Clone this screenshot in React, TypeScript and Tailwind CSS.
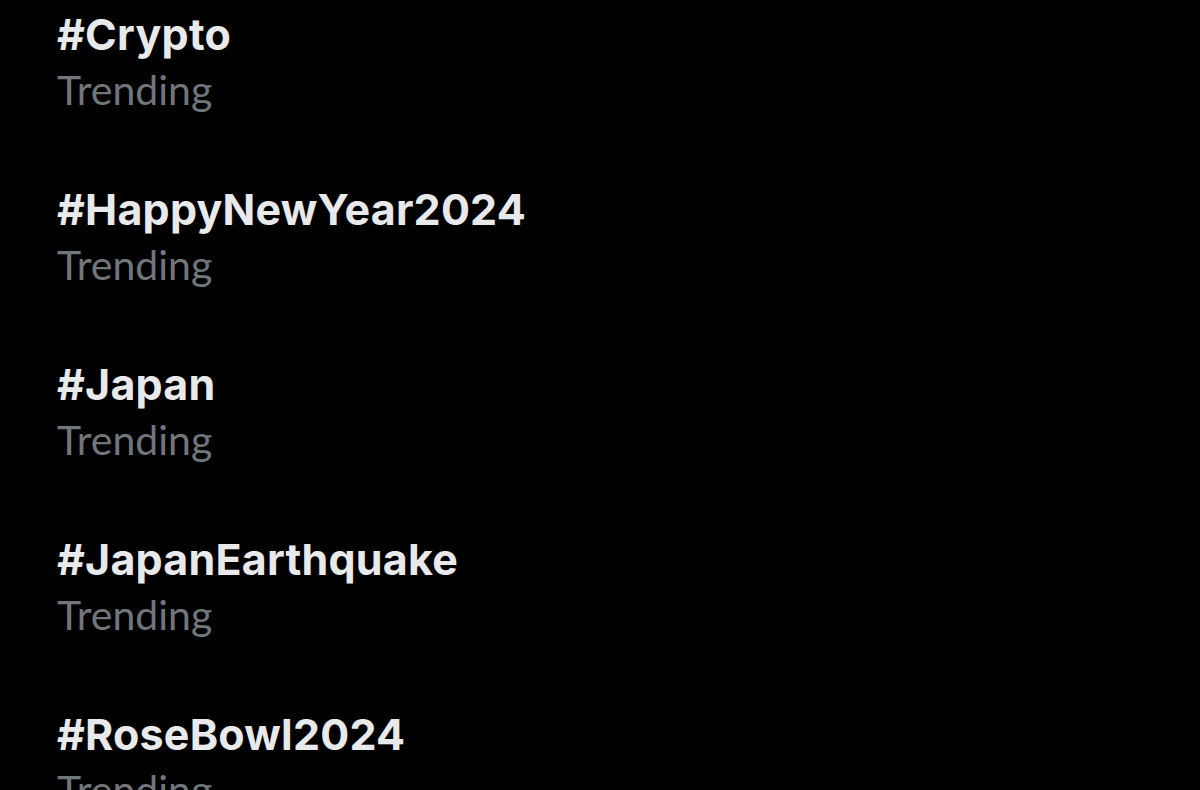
import React from "react";

const items = ["#Crypto", "#HappyNewYear2024", "#Japan", "#JapanEarthquake", "#RoseBowl2024"];

export default function App() {
  return (
    <div className="w-[1200px] h-[790px] bg-black overflow-hidden pt-[8px] pl-[57px]">
      {items.map((t) => (
        <div key={t} className="h-[175px] flex flex-col gap-[6px]">
          <div className="text-[43px] leading-[52px] font-bold text-[#e7e9ea] tracking-[0.2px]" style={{ fontFamily: "Inter, 'Noto Sans', sans-serif" }}>{t}</div>
          <div className="text-[41px] leading-[48px] font-normal text-[#71767b]" style={{ fontFamily: "Lato, 'Noto Sans', sans-serif" }}>Trending</div>
        </div>
      ))}
    </div>
  );
}
